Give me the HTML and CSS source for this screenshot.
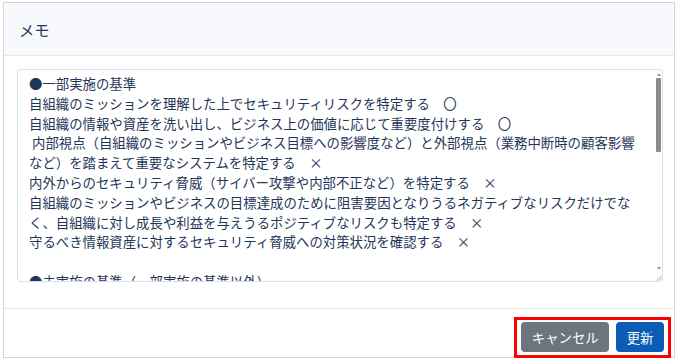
FILE: index.html
```html
<!DOCTYPE html>
<html lang="ja">
<head>
<meta charset="utf-8">
<title>メモ</title>
<link rel="stylesheet" href="styles.css">
</head>
<body>
<div class="page">
  <div class="modal">
    <div class="modal-header">
      <h5 class="modal-title">メモ</h5>
    </div>
    <div class="modal-body">
      <div class="memo-box">
        <div class="memo-text">●一部実施の基準
自組織のミッションを理解した上でセキュリティリスクを特定する　〇
自組織の情報や資産を洗い出し、ビジネス上の価値に応じて重要度付けする　〇
 内部視点（自組織のミッションやビジネス目標への影響度など）と外部視点（業務中断時の顧客影響
など）を踏まえて重要なシステムを特定する　×
内外からのセキュリティ脅威（サイバー攻撃や内部不正など）を特定する　×
自組織のミッションやビジネスの目標達成のために阻害要因となりうるネガティブなリスクだけでな
く、自組織に対し成長や利益を与えうるポジティブなリスクも特定する　×
守るべき情報資産に対するセキュリティ脅威への対策状況を確認する　×

●未実施の基準（一部実施の基準以外）</div>
        <div class="scrollbar">
          <div class="sb-btn"><span class="arrow-up"></span></div>
          <div class="sb-track"><div class="sb-thumb"></div></div>
          <div class="sb-btn"><span class="arrow-down"></span></div>
          <div class="sb-corner">
            <svg width="7" height="7" viewBox="0 0 7 7"><path d="M6.5 1.5 L1.5 6.5 M6.5 4 L4 6.5" stroke="#b5b5b5" stroke-width="1" fill="none"/></svg>
          </div>
        </div>
      </div>
    </div>
    <div class="modal-footer">
      <div class="annot">
        <button class="btn btn-cancel" type="button">キャンセル</button>
        <button class="btn btn-update" type="button">更新</button>
      </div>
    </div>
  </div>
</div>
</body>
</html>
```
FILE: styles.css
```css
html, body {
  margin: 0;
  background: #ffffff;
  font-family: "Noto Sans CJK JP", "Noto Sans", sans-serif;
}

.page {
  padding: 2px 0 0 3px;
}

.modal {
  width: 672px;
  height: 356px;
  box-sizing: border-box;
  border: 1px solid #d6d6d6;
  display: flex;
  flex-direction: column;
  background: #ffffff;
}

.modal-header {
  height: 52px;
  flex: none;
  background: #f8f9fc;
  border-bottom: 1px solid #e6e8ec;
  display: flex;
  align-items: center;
  padding: 0 15px;
}

.modal-title {
  margin: 0;
  font-size: 15.3px;
  font-weight: 400;
  color: #1f3659;
}

.modal-body {
  flex: none;
  height: 252px;
  box-sizing: border-box;
  padding: 13px 11px 0 13px;
}

.memo-box {
  width: 646px;
  height: 213px;
  box-sizing: border-box;
  border: 1px solid #dcdfe4;
  border-radius: 4px;
  display: flex;
  overflow: hidden;
  background: #ffffff;
}

.memo-text {
  flex: 1;
  overflow: hidden;
  white-space: pre;
  padding: 4px 0 0 11px;
  font-size: 13.4px;
  line-height: 19.8px;
  color: #1f3659;
}

.scrollbar {
  flex: none;
  width: 8px;
  display: flex;
  flex-direction: column;
}

.sb-btn {
  height: 8px;
  flex: none;
  display: flex;
  align-items: center;
  justify-content: center;
  padding-left: 1px;
}

.arrow-up {
  width: 0;
  height: 0;
  border-left: 2.5px solid transparent;
  border-right: 2.5px solid transparent;
  border-bottom: 3px solid #9a9a9a;
}

.arrow-down {
  width: 0;
  height: 0;
  border-left: 2.5px solid transparent;
  border-right: 2.5px solid transparent;
  border-top: 3px solid #9a9a9a;
}

.sb-track {
  flex: 1;
  padding: 0 1px 0 2px;
}

.sb-thumb {
  height: 74px;
  background: #8c8c8c;
  border-radius: 1px;
}

.sb-corner {
  height: 9px;
  flex: none;
  display: flex;
  align-items: flex-end;
  justify-content: flex-end;
}

.sb-corner svg {
  display: block;
}

.modal-footer {
  flex: 1;
  border-top: 1px solid #e6e8ec;
  display: flex;
  justify-content: flex-end;
  align-items: flex-start;
  padding: 8px 3px 0 0;
}

.annot {
  border: 3px solid #ff0000;
  padding: 2px 4px 3px 4px;
  display: flex;
  gap: 7px;
}

.btn {
  height: 30px;
  padding: 0 10.5px;
  border: none;
  border-radius: 4px;
  color: #ffffff;
  font-family: "Noto Sans CJK JP", "Noto Sans", sans-serif;
  font-size: 13.4px;
  line-height: 30px;
}

.btn-cancel {
  background: #6c757d;
}

.btn-update {
  background: #0b5cb4;
}
```
